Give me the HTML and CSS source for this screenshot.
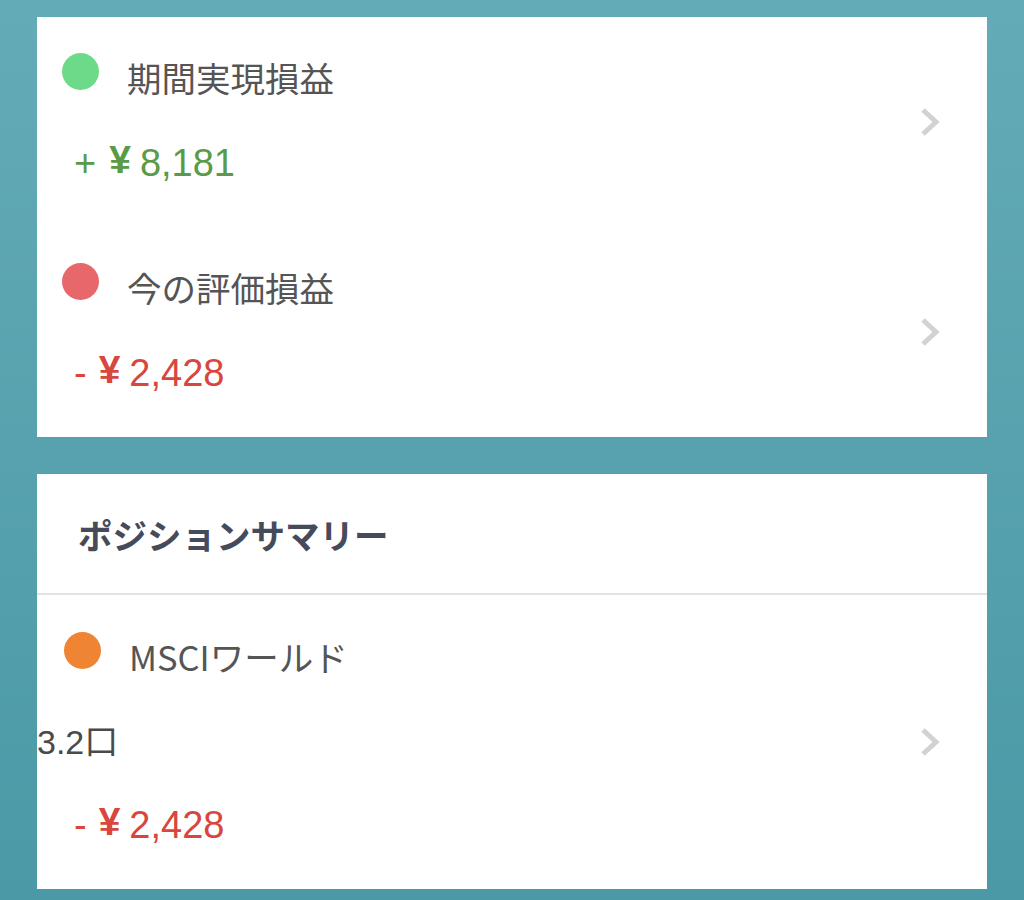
FILE: index.html
```html
<!DOCTYPE html>
<html lang="ja">
<head>
<meta charset="utf-8">
<title>損益</title>
<link rel="stylesheet" href="styles.css">
</head>
<body>
<main class="page">
  <section class="card">
    <div class="row">
      <div class="row-main">
        <div class="head">
          <span class="dot dot-green"></span>
          <span class="label">期間実現損益</span>
        </div>
        <div class="amount amount-pos"><span class="sign">+</span><span class="yen">¥</span><span class="num">8,181</span></div>
      </div>
      <svg class="chev" width="20" height="30" viewBox="0 0 20 30"><polyline points="3,3 16,15 3,27" fill="none" stroke="#d2d2d2" stroke-width="5"/></svg>
    </div>
    <div class="row">
      <div class="row-main">
        <div class="head">
          <span class="dot dot-red"></span>
          <span class="label">今の評価損益</span>
        </div>
        <div class="amount amount-neg"><span class="sign sign-minus">-</span><span class="yen">¥</span><span class="num">2,428</span></div>
      </div>
      <svg class="chev" width="20" height="30" viewBox="0 0 20 30"><polyline points="3,3 16,15 3,27" fill="none" stroke="#d2d2d2" stroke-width="5"/></svg>
    </div>
  </section>

  <section class="card">
    <header class="card-header">ポジションサマリー</header>
    <div class="row row-pos">
      <div class="row-main">
        <div class="head head-pos">
          <span class="dot dot-orange"></span>
          <span class="label">MSCIワールド</span>
        </div>
        <div class="qty">3.2口</div>
        <div class="amount amount-neg amount-pos-row"><span class="sign sign-minus">-</span><span class="yen">¥</span><span class="num">2,428</span></div>
      </div>
      <svg class="chev" width="20" height="30" viewBox="0 0 20 30"><polyline points="3,3 16,15 3,27" fill="none" stroke="#d2d2d2" stroke-width="5"/></svg>
    </div>
  </section>
</main>
</body>
</html>
```

FILE: styles.css
```css
html, body {
  margin: 0;
  padding: 0;
}

body {
  min-height: 900px;
  background: linear-gradient(180deg, #63abb7 0%, #57a2ae 50%, #4b99a7 100%);
  font-family: "Noto Sans CJK JP", "Liberation Sans", sans-serif;
}

.page {
  display: flex;
  flex-direction: column;
  gap: 37px;
  padding: 17px 37px 11px 37px;
}

.card {
  background: #ffffff;
  display: flex;
  flex-direction: column;
}

.row {
  display: flex;
  align-items: center;
  height: 210px;
}

.row-main {
  flex: 1;
  align-self: stretch;
  padding-top: 36px;
  display: flex;
  flex-direction: column;
}

.head {
  display: flex;
  align-items: flex-start;
  padding-left: 25px;
}

.dot {
  width: 37px;
  height: 37px;
  border-radius: 50%;
  flex: none;
}

.dot-green { background: #6dda89; }
.dot-red { background: #e8676a; }
.dot-orange { background: #ef8532; }

.label {
  margin-left: 28px;
  font-size: 34.5px;
  line-height: 48px;
  color: #555555;
}

.amount {
  display: flex;
  align-items: baseline;
  margin-top: 41px;
  padding-left: 37px;
  font-family: "Liberation Sans", "Noto Sans CJK JP", sans-serif;
  font-size: 38px;
  line-height: 42px;
}

.amount-pos { color: #5b9a47; }
.amount-neg { color: #d8463d; }

.sign {
  margin-right: 13px;
}

.sign-minus {
  margin-right: 12px;
}

.yen {
  font-weight: 700;
  font-size: 39px;
  margin-right: 9px;
  position: relative;
  top: -3px;
}

.chev {
  flex: none;
  margin-right: 47px;
}

.card-header {
  height: 119px;
  display: flex;
  align-items: center;
  padding-left: 41px;
  font-size: 34.5px;
  font-weight: 700;
  color: #464b5b;
  border-bottom: 2px solid #e2e2e4;
}

.row-pos {
  height: 294px;
}

.row-pos .row-main {
  padding-top: 37px;
}

.head-pos {
  padding-left: 27px;
}

.qty {
  margin-top: 42px;
  font-family: "Liberation Sans", "Noto Sans CJK JP", sans-serif;
  font-size: 34px;
  line-height: 40px;
  color: #4a4a4a;
}

.amount-pos-row {
  margin-top: 42px;
}
```
